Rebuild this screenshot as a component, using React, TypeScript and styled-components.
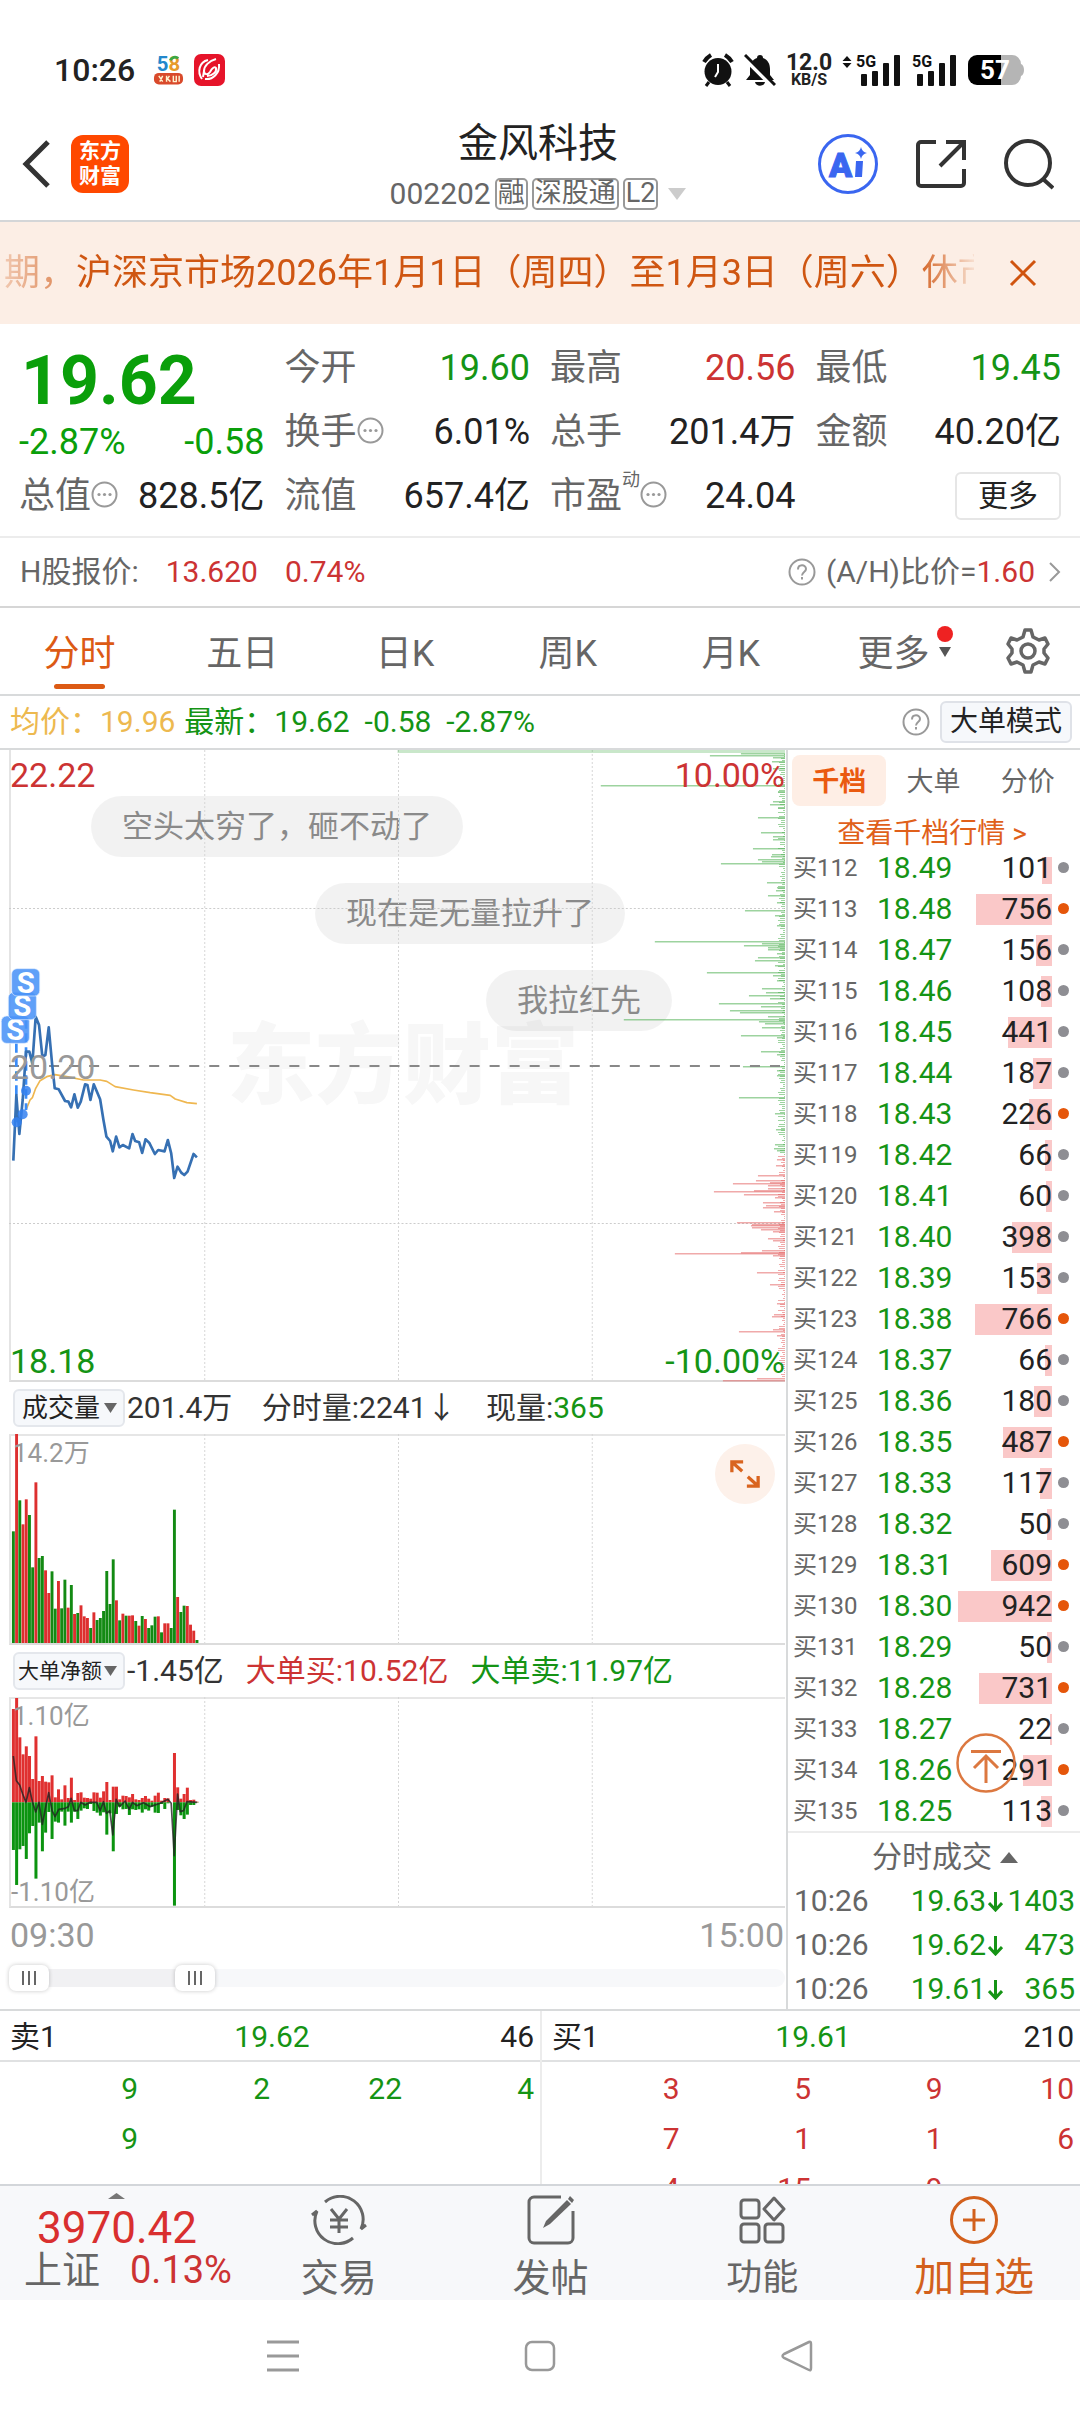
import React from "react";
import styled, { createGlobalStyle, css } from "styled-components";

const RED = "#cc3333";
const GREEN = "#159415";
const ORANGE = "#dc5a14";
const INK = "#222";
const GREY = "#666";
const LINE = "#d8dadb";

const GlobalStyle = createGlobalStyle`
  *, *::before, *::after { box-sizing: border-box; }
  body {
    margin: 0;
    background: #fff;
    color: ${INK};
    font: 400 30px/40px Roboto, "Noto Sans CJK SC", sans-serif;
  }
  button, select, input { font: inherit; color: inherit; margin: 0; }
  a { color: inherit; text-decoration: none; }
  h1, h2, ul, ol { margin: 0; padding: 0; font-weight: 400; list-style: none; }
`;

const Page = styled.main`
  display: flex;
  flex-direction: column;
  width: 100%;
  overflow: hidden;
`;

const PlainButton = styled.button`
  display: flex;
  align-items: center;
  justify-content: center;
  padding: 0;
  border: 0;
  background: none;
  cursor: pointer;
  white-space: nowrap;
`;

/* ---------- status bar ---------- */

const StatusBar = styled.header`
  display: flex;
  align-items: center;
  justify-content: space-between;
  height: 108px;
  padding: 32px 56px 0 54px;
`;
const StatusGroup = styled.div`
  display: flex;
  align-items: center;
  gap: 10px;
`;
const Clock = styled.time`
  margin-right: 8px;
  font-size: 32px;
  font-weight: 500;
`;
const Speed = styled.div`
  display: flex;
  flex-direction: column;
  align-items: center;
  width: 46px;
  font-size: 23px;
  font-weight: 700;
  line-height: 20px;
  small { font-size: 16px; line-height: 14px; }
`;

/* ---------- title bar ---------- */

const TitleBar = styled.div`
  display: grid;
  grid-template-columns: 1fr auto 1fr;
  align-items: center;
  height: 114px;
  padding: 0 26px 0 22px;
  border-bottom: 2px solid #d4d6d8;
`;
const TitleSide = styled.div<{ $end?: boolean; $gap: number }>`
  display: flex;
  align-items: center;
  justify-content: ${(p) => (p.$end ? "flex-end" : "flex-start")};
  gap: ${(p) => p.$gap}px;
`;
const BrandMark = styled.a`
  display: flex;
  flex-direction: column;
  align-items: center;
  justify-content: center;
  width: 58px;
  height: 58px;
  border-radius: 12px;
  background: #ff4800;
  color: #fff;
  font-size: 21px;
  font-weight: 700;
  line-height: 25px;
`;
const TitleBlock = styled.div`
  display: flex;
  flex-direction: column;
  align-items: center;
  padding-top: 10px;
`;
const StockName = styled.h1`
  font-size: 40px;
  line-height: 50px;
`;
const CodeLine = styled.div`
  display: flex;
  align-items: center;
  gap: 4px;
  color: ${GREY};
  font-size: 30px;
  line-height: 50px;
  svg { margin-left: 6px; }
`;
const Tag = styled.span`
  height: 32px;
  padding: 0 1px;
  border: 2px solid #999;
  border-radius: 5px;
  font-size: 27px;
  line-height: 27px;
`;

/* ---------- notice ---------- */

const Notice = styled.section`
  display: flex;
  align-items: center;
  justify-content: space-between;
  height: 102px;
  padding: 0 43px 0 4px;
  background: #fceee5;
  color: #cf5612;
`;
const NoticeText = styled.p`
  flex: 0 1 970px;
  margin: 0;
  overflow: hidden;
  white-space: nowrap;
  font-size: 36px;
  line-height: 52px;
  mask-image: linear-gradient(90deg, rgba(0,0,0,.25), rgba(0,0,0,.6) 50px, #000 70px, #000 910px, rgba(0,0,0,.1));
`;

/* ---------- quote ---------- */

const Quote = styled.section`
  display: grid;
  grid-template-columns: repeat(4, 1fr);
  column-gap: 20px;
  height: 214px;
  padding: 12px 19px 0;
  border-bottom: 2px solid #ececec;
  font-size: 36px;
  grid-template-rows: repeat(3, 64px);
`;
const PriceBlock = styled.div`
  grid-row: span 2;
  display: flex;
  flex-direction: column;
  color: #0a9f0a;
`;
const BigPrice = styled.strong`
  padding: 4px 0 0 2px;
  font-size: 68px;
  font-weight: 700;
  line-height: 82px;
`;
const Between = styled.div`
  display: flex;
  justify-content: space-between;
  align-items: center;
`;
const Stat = styled.div`
  display: flex;
  align-items: center;
  justify-content: space-between;
  white-space: nowrap;
`;
const StatLabel = styled.span`
  display: flex;
  align-items: center;
  color: ${GREY};
  svg { margin-bottom: 4px; }
  sup { align-self: flex-start; font-size: 18px; line-height: 8px; }
`;
const Tone = styled.span<{ $tone?: "up" | "down" | "avg" | "ink" }>`
  color: ${(p) => (p.$tone === "up" ? RED : p.$tone === "down" ? GREEN : p.$tone === "avg" ? "#edb94f" : INK)};
`;
const MoreButton = styled(PlainButton)`
  width: 106px;
  height: 48px;
  margin-left: auto;
  align-self: center;
  border: 2px solid #e6e6e6;
  border-radius: 6px;
  font-size: 30px;
`;

const HShare = styled.section`
  display: flex;
  align-items: center;
  justify-content: space-between;
  height: 70px;
  padding: 0 19px 0 20px;
  border-bottom: 2px solid #d6d6d6;
  color: ${GREY};
`;
const Inline = styled.div<{ $gap: number }>`
  display: flex;
  align-items: center;
  gap: ${(p) => p.$gap}px;
  white-space: nowrap;
`;

/* ---------- period tabs ---------- */

const Tabs = styled.nav`
  display: grid;
  grid-template-columns: repeat(6, 1fr) 103px;
  height: 88px;
  border-bottom: 2px solid ${LINE};
`;
const Tab = styled(PlainButton)<{ $active?: boolean }>`
  position: relative;
  padding: 6px 4px 0 0;
  color: ${(p) => (p.$active ? ORANGE : GREY)};
  font-size: 36px;
  ${(p) =>
    p.$active &&
    css`
      &::after {
        content: "";
        position: absolute;
        bottom: 5px;
        width: 51px;
        height: 5px;
        border-radius: 3px;
        background: ${ORANGE};
      }
    `}
`;
const MoreMarks = styled.svg`
  position: absolute;
  top: 17px;
  right: 24px;
`;

const InfoRow = styled.section`
  display: flex;
  align-items: center;
  justify-content: space-between;
  height: 54px;
  padding: 0 8px 0 10px;
  border-bottom: 2px solid ${LINE};
  line-height: 44px;
`;
const ModeButton = styled(PlainButton)`
  width: 132px;
  height: 42px;
  border: 2px solid #dfe2e8;
  border-radius: 6px;
  background: #f6f8fb;
  font-size: 28px;
`;

/* ---------- workspace ---------- */

const Workspace = styled.section`
  display: grid;
  grid-template-columns: minmax(0, 1fr) 294px;
  border-bottom: 2px solid ${LINE};
`;
const Charts = styled.div`
  display: flex;
  flex-direction: column;
  padding: 0 1px 0 9px;
`;
const Plot = styled.div<{ $height: number }>`
  position: relative;
  height: ${(p) => p.$height}px;
  border-left: 2px solid #e4e4e4;
  border-bottom: 2px solid #dcdcdc;
  > svg {
    position: absolute;
    top: 0;
    left: -2px;
    width: calc(100% + 2px);
    height: 100%;
    overflow: visible;
  }
`;
const SubPlot = styled(Plot)`
  border-top: 2px solid #e6e6e6;
  > svg { top: -2px; height: calc(100% + 2px); }
`;
const AxisLabel = styled.span<{ $at: string; $tone: string; $small?: boolean }>`
  position: absolute;
  color: ${(p) => p.$tone};
  font-size: ${(p) => (p.$small ? 26 : 34)}px;
  line-height: 36px;
  ${(p) => p.$at};
`;
const Watermark = styled.span`
  position: absolute;
  top: 266px;
  left: 216px;
  color: #f7f7f7;
  font-size: 88px;
  font-weight: 900;
  line-height: 100px;
  white-space: nowrap;
`;
const Bubble = styled.span<{ $x: number; $y: number }>`
  position: absolute;
  left: ${(p) => p.$x}px;
  top: ${(p) => p.$y}px;
  padding: 0 31px;
  border-radius: 31px;
  background: rgba(0, 0, 0, 0.05);
  color: #8a8a8a;
  font-size: 31px;
  line-height: 61px;
  white-space: nowrap;
`;
const ExpandButton = styled(PlainButton)`
  position: absolute;
  top: 8px;
  right: 10px;
  width: 60px;
  height: 60px;
  border-radius: 50%;
  background: #fdf1ea;
`;
const IndicatorRow = styled.div`
  display: flex;
  align-items: center;
  height: 52px;
  padding-left: 4px;
  white-space: nowrap;
`;
const Fact = styled.span<{ $tone?: string }>`
  margin: 0 22px 0 2px;
  color: ${(p) => p.$tone || "#333"};
  & + & { margin-left: 0; }
`;
const Picker = styled.label`
  display: grid;
  align-items: center;
  > * { grid-area: 1 / 1; }
  > svg { justify-self: end; margin-right: 8px; pointer-events: none; }
`;
const PickerSelect = styled.select<{ $compact?: boolean }>`
  appearance: none;
  width: 112px;
  height: 38px;
  padding: 0 0 0 ${(p) => (p.$compact ? 3 : 7)}px;
  border: 2px solid #e4e7ec;
  border-radius: 6px;
  background: #f6f8fb;
  font-size: ${(p) => (p.$compact ? 21 : 26)}px;
  line-height: 34px;
`;
const TimeAxis = styled(Between)`
  height: 54px;
  padding: 0 1px;
  color: #999;
  font-size: 34px;
`;
const RangeTrack = styled.div`
  position: relative;
  display: grid;
  align-items: center;
  height: 32px;
  margin-bottom: 15px;
  &::before {
    content: "";
    grid-area: 1 / 1;
    height: 18px;
    border-radius: 9px;
    background: linear-gradient(90deg, #f1f1f3 0 186px, #f7f8fa 186px);
  }
`;
const RangeInput = styled.input`
  grid-area: 1 / 1;
  appearance: none;
  width: 100%;
  height: 26px;
  background: none;
  pointer-events: none;
  &::-webkit-slider-thumb {
    appearance: none;
    width: 40px;
    height: 26px;
    border-radius: 7px;
    box-shadow: 0 0 4px rgba(0, 0, 0, 0.22);
    background:
      linear-gradient(#666, #666) 13px 6px / 2px 14px no-repeat,
      linear-gradient(#666, #666) 19px 6px / 2px 14px no-repeat,
      linear-gradient(#666, #666) 25px 6px / 2px 14px no-repeat,
      #fff;
    pointer-events: auto;
  }
`;

/* ---------- order book ---------- */

const Book = styled.aside`
  position: relative;
  display: flex;
  flex-direction: column;
  border-left: 2px solid ${LINE};
`;
const BookTabs = styled.div`
  display: grid;
  grid-template-columns: repeat(3, 1fr);
  padding: 5px 5px 0 4px;
`;
const BookTab = styled(PlainButton)<{ $active?: boolean }>`
  height: 51px;
  padding-top: 2px;
  border-radius: 8px;
  background: ${(p) => (p.$active ? "#feeee5" : "none")};
  color: ${(p) => (p.$active ? "#ea5a10" : GREY)};
  font-size: 27px;
  font-weight: ${(p) => (p.$active ? 700 : 400)};
`;
const BookLink = styled.a`
  padding: 8px 4px 0 0;
  color: #e0601a;
  font-size: 28px;
  line-height: 39px;
  text-align: center;
`;
const Levels = styled.ol`
  display: flex;
  flex: 1 1 0;
  flex-direction: column;
  justify-content: flex-end;
  min-height: 0;
  margin-top: 4px;
  overflow: hidden;
`;
const Level = styled.li`
  display: grid;
  grid-template-columns: 84px 78px 1fr 11px;
  flex: none;
  align-items: center;
  height: 41px;
  padding: 0 11px 0 5px;
  line-height: 42px;
`;
const LevelName = styled.span`
  color: ${GREY};
  font-size: 24px;
`;
const Volume = styled.span`
  display: grid;
  align-items: center;
  justify-items: end;
  margin-right: 6px;
  > * { grid-area: 1 / 1; }
`;
const VolumeBar = styled.i`
  height: 31px;
  background: #fac8c8;
`;
const Dot = styled.i<{ $hot?: boolean }>`
  width: 11px;
  height: 11px;
  margin-bottom: 2px;
  border-radius: 50%;
  background: ${(p) => (p.$hot ? "#e5560a" : "#8e8e93")};
`;
const TopButton = styled(PlainButton)`
  position: absolute;
  right: 64px;
  bottom: 216px;
`;
const TradesTitle = styled(PlainButton)`
  gap: 8px;
  height: 46px;
  padding: 4px 6px 0 28px;
  border-top: 2px solid #ececec;
  color: ${GREY};
`;
const Trades = styled.table`
  width: 100%;
  border-collapse: collapse;
  td { height: 44px; padding: 4px 0 0; color: ${GREEN}; text-align: right; white-space: nowrap; }
  td:first-child { padding-left: 6px; color: ${GREY}; text-align: left; }
  td:last-child { width: 77px; padding-right: 5px; }
  svg { margin-left: 2px; vertical-align: -1px; }
`;

/* ---------- best bid / ask ---------- */

const Depth = styled.section`
  display: grid;
  grid-template-columns: 1fr 1fr;
  height: 173px;
  overflow: hidden;
`;
const DepthSide = styled.div`
  & + & { border-left: 2px solid #ececec; }
`;
const DepthHead = styled.div`
  display: grid;
  grid-template-columns: 1fr auto 1fr;
  height: 51px;
  padding: 0 6px 0 10px;
  border-bottom: 2px solid #e0e1e2;
  line-height: 52px;
  > :last-child { text-align: right; }
`;
const DepthGrid = styled.div`
  display: grid;
  grid-template-columns: repeat(4, 1fr);
  grid-auto-rows: 50px;
  padding: 2px 6px 0 6px;
  line-height: 50px;
  text-align: right;
`;

/* ---------- bottom bars ---------- */

const Dock = styled.nav`
  display: grid;
  grid-template-columns: 233px repeat(4, 1fr);
  height: 116px;
  border-top: 2px solid #d3d6da;
  background: #f7f8fa;
`;
const IndexCell = styled.a`
  display: flex;
  flex-direction: column;
  align-items: flex-start;
  padding: 7px 0 0 24px;
  color: #d92f2f;
  > svg { margin-left: 84px; }
  strong { margin: 6px 0 0 13px; font-size: 44px; font-weight: 400; line-height: 46px; }
`;
const IndexChange = styled.span`
  display: flex;
  gap: 30px;
  font-size: 38px;
  line-height: 38px;
  color: ${RED};
  em { color: ${GREY}; font-style: normal; }
`;
const DockButton = styled(PlainButton)<{ $accent?: boolean; $size: number }>`
  flex-direction: column;
  justify-content: flex-start;
  gap: 8px;
  padding-top: 9px;
  color: ${(p) => (p.$accent ? "#d2601c" : GREY)};
  font-size: ${(p) => p.$size}px;
  line-height: 50px;
`;
const SystemNav = styled.nav`
  display: grid;
  grid-template-columns: repeat(3, 257px);
  justify-content: center;
  height: 112px;
`;

/* ---------- data ---------- */

const levels: [number, string, number, boolean?][] = [
  [112, "18.49", 101], [113, "18.48", 756, true], [114, "18.47", 156], [115, "18.46", 108],
  [116, "18.45", 441], [117, "18.44", 187], [118, "18.43", 226, true], [119, "18.42", 66],
  [120, "18.41", 60], [121, "18.40", 398], [122, "18.39", 153], [123, "18.38", 766, true],
  [124, "18.37", 66], [125, "18.36", 180], [126, "18.35", 487, true], [127, "18.33", 117],
  [128, "18.32", 50], [129, "18.31", 609, true], [130, "18.30", 942, true], [131, "18.29", 50],
  [132, "18.28", 731, true], [133, "18.27", 22], [134, "18.26", 291, true], [135, "18.25", 113],
];

const trades = [["10:26", "19.63", "1403"], ["10:26", "19.62", "473"], ["10:26", "19.61", "365"]];

/* Intraday series, three units to a pixel. */
const price = "40,1262 49,1065 58,1182 68,1080 78,935 88,935 97,970 107,830 117,855 127,950 136,945 146,862 156,970 164,1045 176,1048 195,1083 205,1085 213,1102 223,1063 233,1103 242,1085 255,1033 262,1035 271,1080 281,1033 300,1078 310,1140 319,1190 330,1203 338,1234 348,1190 358,1222 368,1215 387,1225 397,1182 405,1203 417,1207 426,1239 436,1198 447,1208 464,1242 474,1230 493,1234 503,1200 513,1240 522,1314 532,1280 543,1298 552,1305 562,1295 580,1242 590,1252";
const average = "78,1110 90,1080 97,1073 107,1045 120,1022 140,1010 165,1004 200,1010 250,1020 300,1020 320,1024 345,1040 400,1050 450,1058 510,1066 525,1077 560,1088 590,1091";

const volumes =
  "G577 R285 G484 R556 R481 G528 G685 R430 G657 G651 R694 R762 G697 G809 R726 G808 G722 R806 G738 R825 G822 R799 R832 R837 G867 R820 G843 G837 G816 G696 G795 G661 R784 G844 R824 G830 R830 R829 G846 R860 G831 R840 G867 G859 G833 R832 G880 R853 R853 G867 G512 R774 G819 G800 R801 R857 R875 G903".split(" ");

const flows =
  "207,630 174,735 292,628 343,618 319,657 348,580 417,558 289,716 423,548 408,634 425,578 427,516 406,597 472,545 448,548 478,515 436,557 474,515 413,548 480,515 459,537 457,512 473,505 474,507 476,492 457,513 458,518 473,527 454,517 426,584 480,520 440,634 440,522 478,500 467,508 468,507 472,525 462,508 478,510 480,508 474,518 468,508 476,512 482,500 467,518 458,519 482,492 474,507 475,490 487,487 339,797 442,510 476,526 462,537 443,524 480,495 479,495 485,488"
    .split(" ")
    .map((pair) => pair.split(",").map(Number));
const net = "40,348 49,422 59,435 68,462 78,487 88,443 97,485 107,516 117,487 127,553 136,505 146,458 156,512 165,530 176,508 195,505 205,500 213,475 223,512 233,512 242,487 255,495 270,487 290,487 300,512 310,485 319,520 329,512 338,585 348,478 358,500 375,483 387,508 397,487 410,497 430,488 450,500 480,490 503,478 513,490 522,647 532,462 540,515 550,512 560,485 590,487";

/* Resting orders by price: distance from the top of the plot, bar length. */
const asks: [number, number][] = [
  [3, 44], [5, 75], [7, 12], [11, 13], [18, 12], [35, 184], [41, 7], [51, 12], [54, 15], [57, 7], [67, 27], [82, 24], [86, 12], [89, 12], [98, 32],
  [104, 13], [106, 14], [109, 27], [111, 23], [113, 64], [132, 18], [137, 8], [140, 9], [145, 17], [152, 8], [160, 40], [165, 10], [175, 8], [191, 130],
  [193, 23], [195, 41], [197, 17], [199, 17], [203, 8], [207, 27], [210, 30], [215, 10], [222, 78], [225, 12], [230, 8], [238, 23], [242, 19], [245, 36],
  [248, 15], [253, 66], [256, 24], [260, 55], [262, 45], [266, 17], [269, 161], [271, 26], [273, 20], [277, 23], [285, 44], [287, 8], [301, 24], [304, 8],
  [316, 42], [320, 8], [325, 8], [347, 46], [363, 10], [379, 9], [394, 10], [398, 11], [400, 8],
];
const bids: [number, number][] = [
  [409, 8], [415, 9], [425, 27], [430, 29], [432, 15], [433, 52], [435, 17], [438, 17], [440, 31], [441, 71], [444, 41], [447, 10], [452, 22], [455, 19],
  [457, 22], [461, 11], [472, 48], [474, 33], [475, 34], [477, 33], [479, 24], [481, 12], [488, 17], [490, 12], [500, 23], [502, 44], [503, 110],
  [505, 12], [522, 28], [534, 15], [553, 8], [564, 11], [566, 13], [579, 12], [581, 46], [585, 8], [628, 28], [630, 62],
];
const noise = Array.from({ length: 312 }, (_, i) => [i * 2 + 4, 1 + ((i * 37 + ((i * i) % 11) * 5) % 7)]);

/* ---------- drawings ---------- */

const Info = () => (
  <svg width="27" height="27" viewBox="0 0 27 27" aria-hidden="true">
    <circle cx="13.5" cy="13.5" r="12" fill="none" stroke="#999" strokeWidth="2" />
    <g fill="#999"><circle cx="8" cy="13.5" r="1.6" /><circle cx="13.5" cy="13.5" r="1.6" /><circle cx="19" cy="13.5" r="1.6" /></g>
  </svg>
);
const Help = () => (
  <svg width="28" height="28" viewBox="0 0 28 28" aria-hidden="true" fill="none" stroke="#999" strokeWidth="2">
    <circle cx="14" cy="14" r="12.5" />
    <path d="M10 11.5c0-5.5 8-5.5 8-.5 0 3-4 3-4 6.5" />
    <path d="M14 19v2.5" />
  </svg>
);
const Caret = ({ w = 13, h = 10, up = false, fill = "#666" }) => (
  <svg width={w} height={h} viewBox="0 0 10 10" preserveAspectRatio="none" aria-hidden="true">
    <path d={up ? "M0 10H10L5 0z" : "M0 0H10L5 10z"} fill={fill} />
  </svg>
);
const Signal = ({ arrows = false }) => (
  <svg width={arrows ? 60 : 46} height="34" viewBox={arrows ? "-14 0 60 34" : "0 0 46 34"} aria-label="5G" overflow="visible">
    {arrows && <path d="M-9 3l4.500 5h-9zM-9 15l4.500-5h-9z" fill="#111" />}
    <text x="0" y="14" fontSize="16" fontWeight="700" fill="#111">5G</text>
    <g fill="#111">
      <rect x="5" y="21" width="6" height="12" rx="1" /><rect x="16" y="18" width="6" height="15" rx="1" />
      <rect x="27" y="10" width="6" height="23" rx="1" /><rect x="38" y="2" width="6" height="31" rx="1" />
    </g>
  </svg>
);

const Grid = ({ h }: { h: number }) => (
  <path d={`M195.5 0V${h}M389 0V${h}M582.5 0V${h}`} stroke="#d6d6d6" strokeWidth="1" strokeDasharray="2 2" fill="none" />
);

const PriceChart = () => (
  <svg viewBox="0 0 775 630" preserveAspectRatio="none" role="img" aria-label="分时走势">
    <Grid h={630} />
    <path d="M0 158.5H775M0 473.5H775" stroke="#ccc" strokeDasharray="2 2" />
    <g fill="#4caf50" fillOpacity=".55">
      <rect x="388" y="0" width="387" height="3" fillOpacity=".3" />
      {noise.filter(([y]) => y < 405).map(([y, w]) => <rect key={y} x={775 - w} y={y} width={w} height="1" />)}
      {asks.map(([y, w]) => <rect key={y} x={775 - w} y={y} width={w} height="1.5" />)}
    </g>
    <g fill="#e25555" fillOpacity=".5">
      {noise.filter(([y]) => y > 405).map(([y, w]) => <rect key={y} x={775 - w} y={y} width={w} height="1" />)}
      {bids.map(([y, w]) => <rect key={y} x={775 - w} y={y} width={w} height="1.5" />)}
    </g>
    <path d="M0 316H775" stroke="#888" strokeWidth="2" strokeDasharray="10 10" />
    <g transform="translate(-9 -10) scale(.33333)" fill="none" strokeLinejoin="round">
      <polyline points={average} stroke="#efb750" strokeWidth="5" />
      <path d="M49 910V1147M78 838V1110" stroke="#3b8df8" strokeWidth="8" strokeDasharray="28 14" />
      <polyline points={price} stroke="#3670b3" strokeWidth="8" />
      <g fill="#3280f0" fillOpacity=".85"><circle cx="78" cy="1052" r="15" /><circle cx="68" cy="1123" r="15" /><circle cx="50" cy="1147" r="15" /></g>
      {[[4, 828], [25, 757], [35, 686]].map(([x, y]) => (
        <g key={y}>
          <rect x={x} y={y} width="84" height="82" rx="16" fill="#4a93f7" fillOpacity=".88" stroke="#dcebff" strokeWidth="2" />
          <text x={x + 42} y={y + 72} fontSize="88" fontWeight="700" fill="#fff" textAnchor="middle">S</text>
        </g>
      ))}
    </g>
  </svg>
);

const VolumeChart = () => (
  <svg viewBox="0 0 775 209" preserveAspectRatio="none" role="img" aria-label="成交量">
    <Grid h={209} />
    {volumes.map((v, i) => {
      const h = (912 - Number(v.slice(1))) / 3;
      return <rect key={i} x={2.9 + i * 3.217} y={209 - h} width="2.9" height={h} fill={v[0] === "R" ? "#dd2f2f" : "#138a13"} />;
    })}
  </svg>
);

const FlowChart = () => (
  <svg viewBox="0 0 775 209" preserveAspectRatio="none" role="img" aria-label="大单净额">
    <Grid h={209} />
    {flows.map(([top, bottom], i) => (
      <g key={i}>
        <rect x={2.9 + i * 3.217} y={(top - 171) / 3} width="3" height={(487 - top) / 3} fill="#e03030" />
        <rect x={2.9 + i * 3.217} y={105.3} width="3" height={(bottom - 487) / 3} fill="#0b9410" />
      </g>
    ))}
    <g transform="translate(-9 -57) scale(.33333)">
      <polyline points={net} fill="none" stroke="#222" strokeOpacity=".8" strokeWidth="5" strokeLinejoin="round" />
    </g>
  </svg>
);

/* ---------- page ---------- */

const askQueue = ["9", "2", "22", "4", "9"];
const bidQueue = ["3", "5", "9", "10", "7", "1", "1", "6", "4", "15", "9"];

export default function App() {
  return (
    <>
      <GlobalStyle />
      <Page>
        <StatusBar>
          <StatusGroup>
            <Clock>10:26</Clock>
            <svg width="31" height="34" viewBox="0 0 32 34" aria-hidden="true" overflow="visible">
              <text x="16" y="18" fontSize="21" fontWeight="700" textAnchor="middle" fill="#2288cc">5<tspan fill="#e79a2b">8</tspan></text>
              <path d="M18 7a5 5 0 0 1 8-2" stroke="#3aa845" strokeWidth="3" fill="none" />
              <rect x="1" y="20" width="30" height="12" rx="5" fill="#d94a2b" />
              <path d="M6 23l4 6M10 23l-3 6M14 23v6M17 23l-2 3 3 3M21 23v6h3v-6M27 23v6" stroke="#fff3d0" strokeWidth="1.5" fill="none" />
            </svg>
            <svg width="31" height="32" viewBox="0 0 31 32" aria-hidden="true">
              <rect width="31" height="32" rx="7" fill="#e6142a" />
              <path d="M14 6C5 8 3 18 8 25M25 10c1 9-6 16-14 15M22 5C15 7 10 12 10 17c0 4 4 4 6 1 2-4 5-6 6-4 1 4-4 8-9 8M10 17l-1 6" fill="none" stroke="#fff" strokeWidth="2" />
            </svg>
          </StatusGroup>
          <StatusGroup>
            <svg width="32" height="34" viewBox="0 0 32 34" aria-hidden="true">
              <circle cx="16" cy="18.5" r="13.5" fill="#111" />
              <path d="M2 9a20 20 0 0 1 7-7M30 9a20 20 0 0 0-7-7" stroke="#111" strokeWidth="4" fill="none" />
              <path d="M7 29l-3 4M25 29l3 4" stroke="#111" strokeWidth="3" />
              <path d="M16 11v8l-3 5" stroke="#fff" strokeWidth="2" fill="none" />
            </svg>
            <svg width="32" height="34" viewBox="0 0 32 34" aria-hidden="true">
              <path d="M16 2c2 0 3 1 3 3 5 2 7 6 7 11v6l4 5H2l4-5v-6c0-5 2-9 7-11 0-2 1-3 3-3zM11 29h10c-1 5-9 5-10 0z" fill="#111" />
              <path d="M-1 4L30 35" stroke="#fff" strokeWidth="4" />
              <path d="M1 2L31 32" stroke="#111" strokeWidth="3" />
            </svg>
            <Speed>12.0<small>KB/S</small></Speed>
            <Signal arrows />
            <Signal />
            <svg width="56" height="30" viewBox="0 0 56 30" aria-label="57%">
              <path d="M9 0H33V30H9a9 9 0 0 1-9-9V9a9 9 0 0 1 9-9z" fill="#000" />
              <path d="M33 0H44a9 9 0 0 1 9 9c4 1 4 11 0 12a9 9 0 0 1-9 9H33z" fill="#b5b5b5" />
              <text x="27" y="24" fontSize="26" fontWeight="700" fill="#fff" textAnchor="middle">57</text>
            </svg>
          </StatusGroup>
        </StatusBar>

        <TitleBar>
          <TitleSide $gap={21}>
            <PlainButton aria-label="返回">
              <svg width="28" height="48" viewBox="0 0 28 48"><path d="M26 2L4 24L26 46" fill="none" stroke="#333" strokeWidth="5" /></svg>
            </PlainButton>
            <BrandMark href="#home"><span>东方</span><span>财富</span></BrandMark>
          </TitleSide>
          <TitleBlock>
            <StockName>金风科技</StockName>
            <CodeLine>
              002202<Tag>融</Tag><Tag>深股通</Tag><Tag>L2</Tag>
              <Caret w={18} h={12} fill="#ccc" />
            </CodeLine>
          </TitleBlock>
          <TitleSide $end $gap={38}>
            <PlainButton aria-label="Ai">
              <svg width="60" height="60" viewBox="0 0 60 60">
                <circle cx="30" cy="30" r="28.5" fill="none" stroke="#3a66f0" strokeWidth="3" />
                <text x="11" y="43" fontSize="34" fontWeight="900" fill="#3a66f0" stroke="#3a66f0" strokeWidth="1">A</text>
                <path d="M38 27h7l-1 16h-7z" fill="#3a66f0" />
                <path d="M43 13q1 5 6 6-5 1-6 6-1-5-6-6 5-1 6-6z" fill="#3a66f0" />
              </svg>
            </PlainButton>
            <PlainButton aria-label="分享">
              <svg width="50" height="50" viewBox="0 0 50 50" fill="none" stroke="#333" strokeWidth="4">
                <path d="M20 3H5a3 3 0 0 0-3 3V44a3 3 0 0 0 3 3H45a3 3 0 0 0 3-3V30M30 3H48V21M47 4L24 27" />
              </svg>
            </PlainButton>
            <PlainButton aria-label="搜索">
              <svg width="50" height="52" viewBox="0 0 50 52" fill="none" stroke="#333" strokeWidth="4">
                <circle cx="24" cy="25" r="22" /><path d="M39 41L49 50" />
              </svg>
            </PlainButton>
          </TitleSide>
        </TitleBar>

        <Notice>
          <NoticeText>期，沪深京市场2026年1月1日（周四）至1月3日（周六）休市</NoticeText>
          <PlainButton aria-label="关闭">
            <svg width="28" height="28" viewBox="0 0 28 28"><path d="M2 2L26 26M26 2L2 26" stroke="#d0540f" strokeWidth="3" /></svg>
          </PlainButton>
        </Notice>

        <Quote>
          <PriceBlock>
            <BigPrice>19.62</BigPrice>
            <Between><span>-2.87%</span><span>-0.58</span></Between>
          </PriceBlock>
          <Stat><StatLabel>今开</StatLabel><Tone $tone="down">19.60</Tone></Stat>
          <Stat><StatLabel>最高</StatLabel><Tone $tone="up">20.56</Tone></Stat>
          <Stat><StatLabel>最低</StatLabel><Tone $tone="down">19.45</Tone></Stat>
          <Stat><StatLabel>换手<Info /></StatLabel><Tone>6.01%</Tone></Stat>
          <Stat><StatLabel>总手</StatLabel><Tone>201.4万</Tone></Stat>
          <Stat><StatLabel>金额</StatLabel><Tone>40.20亿</Tone></Stat>
          <Stat><StatLabel>总值<Info /></StatLabel><Tone>828.5亿</Tone></Stat>
          <Stat><StatLabel>流值</StatLabel><Tone>657.4亿</Tone></Stat>
          <Stat><StatLabel>市盈<sup>动</sup><Info /></StatLabel><Tone>24.04</Tone></Stat>
          <MoreButton>更多</MoreButton>
        </Quote>

        <HShare>
          <Inline $gap={27}>H股报价:<Tone $tone="up">13.620</Tone><Tone $tone="up">0.74%</Tone></Inline>
          <Inline $gap={10}>
            <Help />
            <span>(A/H)比价=<Tone $tone="up">1.60</Tone></span>
            <svg width="16" height="22" viewBox="0 0 16 22"><path d="M5 2L14 11L5 20" fill="none" stroke="#999" strokeWidth="2" /></svg>
          </Inline>
        </HShare>

        <Tabs>
          <Tab $active>分时</Tab>
          <Tab>五日</Tab>
          <Tab>日K</Tab>
          <Tab>周K</Tab>
          <Tab>月K</Tab>
          <Tab>
            更多
            <MoreMarks width="16" height="34" viewBox="0 0 16 34" aria-hidden="true">
              <circle cx="8" cy="9" r="8" fill="#ee2222" /><path d="M2 22H14L8 32z" fill="#555" />
            </MoreMarks>
          </Tab>
          <PlainButton aria-label="设置">
            <svg width="44" height="46" viewBox="0 0 44 46" fill="none" stroke="#666" strokeWidth="3.5" strokeLinejoin="round">
              <path d="M19 2h6l2 7 6 3 6-2 3 6-4 5v4l4 5-3 6-6-2-6 3-2 7h-6l-2-7-6-3-6 2-3-6 4-5v-4l-4-5 3-6 6 2 6-3z" />
              <circle cx="22" cy="23" r="7" />
            </svg>
          </PlainButton>
        </Tabs>

        <InfoRow>
          <Inline $gap={9}>
            <Tone $tone="avg">均价：19.96</Tone>
            <Tone $tone="down">最新：19.62&nbsp; -0.58&nbsp; -2.87%</Tone>
          </Inline>
          <Inline $gap={10}><Help /><ModeButton>大单模式</ModeButton></Inline>
        </InfoRow>

        <Workspace>
          <Charts>
            <Plot $height={632}>
              <Watermark>东方财富</Watermark>
              <Bubble $x={80} $y={46}>空头太穷了，砸不动了</Bubble>
              <Bubble $x={304} $y={133}>现在是无量拉升了</Bubble>
              <Bubble $x={475} $y={220}>我拉红先</Bubble>
              <PriceChart />
              <AxisLabel $at="top: 7px; left: -1px" $tone={RED}>22.22</AxisLabel>
              <AxisLabel $at="top: 7px; right: 0" $tone={RED}>10.00%</AxisLabel>
              <AxisLabel $at="top: 299px; left: -1px" $tone="#999">20.20</AxisLabel>
              <AxisLabel $at="bottom: 1px; left: -1px" $tone={GREEN}>18.18</AxisLabel>
              <AxisLabel $at="bottom: 1px; right: 0" $tone={GREEN}>-10.00%</AxisLabel>
            </Plot>

            <IndicatorRow>
              <Picker>
                <PickerSelect aria-label="副图一"><option>成交量</option></PickerSelect>
                <Caret />
              </Picker>
              <Fact>201.4万</Fact>
              <Fact>&nbsp;分时量:2241↓</Fact>
              <Fact>&nbsp;现量:<Tone $tone="down">365</Tone></Fact>
            </IndicatorRow>
            <SubPlot $height={211}>
              <VolumeChart />
              <AxisLabel $small $at="top: -1px; left: 2px" $tone="#999">14.2万</AxisLabel>
              <ExpandButton aria-label="放大">
                <svg width="30" height="30" viewBox="0 0 32 32" fill="none" stroke="#d9641f" strokeWidth="3.5">
                  <path d="M2 14V3H14M3 4L13 13M30 18V29H18M29 28L19 19" />
                </svg>
              </ExpandButton>
            </SubPlot>

            <IndicatorRow>
              <Picker>
                <PickerSelect $compact aria-label="副图二"><option>大单净额</option></PickerSelect>
                <Caret />
              </Picker>
              <Fact>-1.45亿</Fact>
              <Fact $tone={RED}>大单买:10.52亿</Fact>
              <Fact $tone={GREEN}>大单卖:11.97亿</Fact>
            </IndicatorRow>
            <SubPlot $height={211}>
              <FlowChart />
              <AxisLabel $small $at="top: -1px; left: 2px" $tone="#999">1.10亿</AxisLabel>
              <AxisLabel $small $at="bottom: -4px; left: 0" $tone="#999">-1.10亿</AxisLabel>
            </SubPlot>

            <TimeAxis><span>09:30</span><span>15:00</span></TimeAxis>
            <RangeTrack>
              <RangeInput type="range" aria-label="开始时间" min={0} max={240} defaultValue={0} />
              <RangeInput type="range" aria-label="结束时间" min={0} max={240} defaultValue={54} />
            </RangeTrack>
          </Charts>

          <Book>
            <BookTabs>
              <BookTab $active>千档</BookTab>
              <BookTab>大单</BookTab>
              <BookTab>分价</BookTab>
            </BookTabs>
            <BookLink href="#depth">查看千档行情 &gt;</BookLink>
            <Levels>
              {levels.map(([n, p, v, hot]) => (
                <Level key={n}>
                  <LevelName>买{n}</LevelName>
                  <Tone $tone="down">{p}</Tone>
                  <Volume>
                    <VolumeBar style={{ width: Math.round(v / 10) }} />
                    <span>{v}</span>
                  </Volume>
                  <Dot $hot={hot} />
                </Level>
              ))}
            </Levels>
            <TopButton aria-label="回到顶部">
              <svg width="60" height="60" viewBox="0 0 60 60" fill="none" stroke="#dc7840" strokeWidth="2.5">
                <circle cx="30" cy="30" r="28.5" />
                <path d="M15 18.5H45M30 50V23M18 35L30 23L42 35" strokeWidth="3" />
              </svg>
            </TopButton>
            <TradesTitle>分时成交<Caret w={18} h={11} up /></TradesTitle>
            <Trades>
              <tbody>
                {trades.map(([t, p, v]) => (
                  <tr key={p}>
                    <td>{t}</td>
                    <td>
                      {p}
                      <svg width="15" height="20" viewBox="0 0 15 20"><path d="M7.5 0V17M1 11L7.5 18L14 11" fill="none" stroke={GREEN} strokeWidth="3" /></svg>
                    </td>
                    <td>{v}</td>
                  </tr>
                ))}
              </tbody>
            </Trades>
          </Book>
        </Workspace>

        <Depth>
          <DepthSide>
            <DepthHead><span>卖1</span><Tone $tone="down">19.62</Tone><span>46</span></DepthHead>
            <DepthGrid>{askQueue.map((n, i) => <Tone key={i} $tone="down">{n}</Tone>)}</DepthGrid>
          </DepthSide>
          <DepthSide>
            <DepthHead><span>买1</span><Tone $tone="down">19.61</Tone><span>210</span></DepthHead>
            <DepthGrid>{bidQueue.map((n, i) => <Tone key={i} $tone="up">{n}</Tone>)}</DepthGrid>
          </DepthSide>
        </Depth>

        <Dock>
          <IndexCell href="#index">
            <Caret w={17} h={6} up fill="#777" />
            <strong>3970.42</strong>
            <IndexChange><em>上证</em>0.13%</IndexChange>
          </IndexCell>
          <DockButton $size={38}>
            <svg width="56" height="50" viewBox="0 0 56 50" fill="none" stroke="#666" strokeWidth="3">
              <path d="M14 7A23 23 0 0 1 50 34L55 30M42 43A23 23 0 0 1 6 16L1 20" />
              <path d="M20 14L28 24L36 14M28 24V38M19 25H37M19 32H37" />
            </svg>
            交易
          </DockButton>
          <DockButton $size={38}>
            <svg width="48" height="50" viewBox="0 0 48 50" fill="none" stroke="#666" strokeWidth="3">
              <path d="M34 2H7a5 5 0 0 0-5 5V43a5 5 0 0 0 5 5H41a5 5 0 0 0 5-5V16" />
              <path d="M16 33L19 26L40 5L44 9L23 29z" fill="#666" stroke="none" />
              <path d="M41 4L43 1L47 5L45 8z" fill="#666" stroke="none" />
            </svg>
            发帖
          </DockButton>
          <DockButton $size={36}>
            <svg width="48" height="50" viewBox="0 0 48 50" fill="none" stroke="#666" strokeWidth="3" strokeLinejoin="round">
              <rect x="3" y="5" width="18" height="18" rx="3" /><rect x="3" y="29" width="18" height="18" rx="3" />
              <rect x="27" y="29" width="18" height="18" rx="3" /><path d="M36 3L46 14L36 25L26 14z" />
            </svg>
            功能
          </DockButton>
          <DockButton $accent $size={40}>
            <svg width="50" height="50" viewBox="0 0 50 50" fill="none" stroke="#d2601c" strokeWidth="3">
              <circle cx="25" cy="25" r="22.5" /><path d="M25 14V36M14 25H36" />
            </svg>
            加自选
          </DockButton>
        </Dock>

        <SystemNav>
          <PlainButton aria-label="最近任务">
            <svg width="32" height="32" viewBox="0 0 32 32"><path d="M0 2H32M0 16H32M0 30H32" stroke="#999" strokeWidth="3" /></svg>
          </PlainButton>
          <PlainButton aria-label="主页">
            <svg width="32" height="32" viewBox="0 0 32 32"><rect x="2" y="2" width="28" height="28" rx="6" fill="none" stroke="#999" strokeWidth="2.5" /></svg>
          </PlainButton>
          <PlainButton aria-label="后退">
            <svg width="32" height="32" viewBox="0 0 32 32"><path d="M3 14L28 2Q30 1 30 4V28Q30 31 28 30L3 18Q0 16 3 14z" fill="none" stroke="#999" strokeWidth="2.5" /></svg>
          </PlainButton>
        </SystemNav>
      </Page>
    </>
  );
}
